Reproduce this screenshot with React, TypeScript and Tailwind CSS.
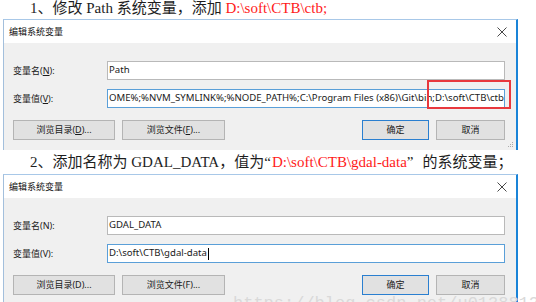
import React from "react";

const dlgFont = { fontFamily: "'Noto Sans', 'Noto Sans CJK SC', sans-serif" };
const serif = { fontFamily: "'Liberation Serif', 'Noto Sans CJK SC', serif" };

function Btn({ children, primary, w }: { children: React.ReactNode; primary?: boolean; w: string }) {
  return (
    <div
      className={`${w} h-[20px] flex items-center justify-center text-[9px] text-[#1a1a1a] ${
        primary ? "bg-[#e1e1e1] border-[1.5px] border-[#2a7fd0]" : "bg-[#e1e1e1] border border-[#b4b4b4]"
      }`}
    >
      {children}
    </div>
  );
}

function Key({ k, u }: { k: string; u?: boolean }) {
  return <span className={u ? "underline" : ""}>{k}</span>;
}

function Dialog({
  name,
  value,
  h,
  cursor,
  grip,
  u,
  children,
}: {
  name: string;
  value: string;
  h: string;
  cursor?: boolean;
  grip?: boolean;
  u?: boolean;
  children?: React.ReactNode;
}) {
  return (
    <div
      className={`relative ml-[3px] w-[515px] ${h} shrink-0 flex flex-col border-t border-t-[#a8c8e8] border-l border-l-[#a3bfdc] border-r-2 border-r-[#1a84d8]`}
      style={dlgFont}
    >
      <div className="h-[23px] bg-white flex items-center justify-between pl-[5px] pr-[9px]">
        <span className="text-[9px] text-[#111] leading-none">编辑系统变量</span>
        <svg width="10" height="10" viewBox="0 0 10 10">
          <path d="M0.5 0.5L9.5 9.5M9.5 0.5L0.5 9.5" stroke="#333" strokeWidth="0.9" />
        </svg>
      </div>
      <div className="flex-1 bg-[#f0f0f0] flex flex-col pt-[18px] pl-[9px] pr-[11px]">
        <div className="flex items-center h-[19px]">
          <span className="w-[94px] text-[9px] text-[#1a1a1a]">
            变量名(<Key k="N" u={u} />):
          </span>
          <div className="flex-1 h-[19px] bg-white border border-[#b9b9b9] flex items-center pl-[1px] text-[9.6px] text-[#1a1a1a] whitespace-nowrap overflow-hidden">
            {name}
          </div>
        </div>
        <div className="flex items-center h-[19px] mt-[9px]">
          <span className="w-[94px] text-[9px] text-[#1a1a1a]">
            变量值(<Key k="V" u={u} />):
          </span>
          <div className="flex-1 h-[19px] bg-white border border-[#5a9fd8] flex items-center pl-[1px] text-[9.6px] text-[#1a1a1a] whitespace-nowrap overflow-hidden">
            {value}
            {cursor && <span className="inline-block w-[1px] h-[12px] bg-black ml-[1px]" />}
          </div>
        </div>
        <div className="flex items-center mt-[12px]">
          <Btn w="w-[102px]">
            浏览目录(<Key k="D" u={u} />)...
          </Btn>
          <div className="w-[7px]" />
          <Btn w="w-[103px]">
            浏览文件(<Key k="F" u={u} />)...
          </Btn>
          <div className="flex-1" />
          <Btn w="w-[67px]" primary>
            确定
          </Btn>
          <div className="w-[7px]" />
          <Btn w="w-[69px]">取消</Btn>
        </div>
      </div>
      {grip && (
        <div className="absolute right-[3px] bottom-[3px] grid grid-cols-3 gap-[1px]">
          <span className="w-[1px] h-[1px]" />
          <span className="w-[1px] h-[1px]" />
          <span className="w-[1px] h-[1px] bg-[#aaa]" />
          <span className="w-[1px] h-[1px]" />
          <span className="w-[1px] h-[1px] bg-[#aaa]" />
          <span className="w-[1px] h-[1px] bg-[#aaa]" />
          <span className="w-[1px] h-[1px] bg-[#aaa]" />
          <span className="w-[1px] h-[1px] bg-[#aaa]" />
          <span className="w-[1px] h-[1px] bg-[#aaa]" />
        </div>
      )}
      {children}
    </div>
  );
}

export default function App() {
  return (
    <div className="relative w-[536px] h-[302px] bg-white overflow-hidden flex flex-col">
      <div className="h-[19px] shrink-0 pl-[30px] text-[15px] leading-[17px] text-[#1e1e1e] whitespace-nowrap" style={serif}>
        1、修改 Path 系统变量，添加 <span className="text-[#ff1a1a]">D:\soft\CTB\ctb;</span>
      </div>
      <Dialog
        name="Path"
        value="OME%;%NVM_SYMLINK%;%NODE_PATH%;C:\Program Files (x86)\Git\bin;D:\soft\CTB\ctb"
        h="h-[131px]"
        grip
        u
      >
        <div className="absolute left-[423px] top-[60px] w-[84px] h-[29px] border-2 border-[#e8383d]" />
      </Dialog>
      <div className="h-[24px] shrink-0 pl-[30px] pt-[4px] text-[15px] leading-[17px] text-[#1e1e1e] whitespace-nowrap" style={serif}>
        2、添加名称为 GDAL_DATA，值为“<span className="ml-[1px] text-[#ff1a1a]">D:\soft\CTB\gdal-data</span>”
        <span className="ml-[9px]">的系统变量；</span>
      </div>
      <Dialog name="GDAL_DATA" value="D:\soft\CTB\gdal-data" h="h-[140px]" cursor />
      <div
        className="absolute left-[233px] top-[294px] text-[17px] leading-[20px] text-[#d9d9d9] whitespace-nowrap"
        style={{ fontFamily: "'Liberation Mono', monospace" }}
      >
        https://blog.csdn.net/u0138812
      </div>
    </div>
  );
}
